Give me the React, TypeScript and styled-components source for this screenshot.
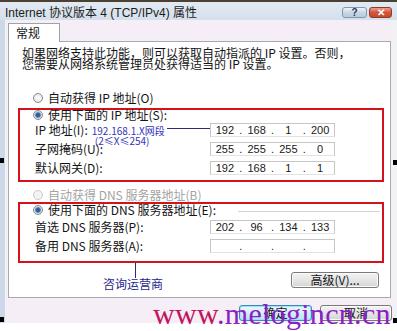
import styled, { createGlobalStyle } from "styled-components";

const GlobalStyle = createGlobalStyle`
  html, body {
    margin: 0;
    padding: 0;
    background: #ffffff;
  }
  body {
    font-family: "Noto Sans CJK SC", "Liberation Sans", sans-serif;
    font-size: 12px;
    color: #141414;
  }
`;

const Page = styled.div`
  position: relative;
  width: 397px;
  height: 331px;
  overflow: hidden;
  background: #ffffff;
`;

const Window = styled.div`
  width: 397px;
  height: 323px;
  box-sizing: border-box;
  border-top: 2px solid #4a4034;
  display: flex;
  flex-direction: column;
  background: #f6eef6;
`;

const TitleBar = styled.div`
  height: 18px;
  flex-shrink: 0;
  display: flex;
  justify-content: space-between;
  align-items: flex-start;
  padding: 0 5px 0 5px;
  background: linear-gradient(#e3eaf2, #d5e0eb);
`;

const Title = styled.div`
  font-family: "Liberation Sans", "Noto Sans CJK SC", sans-serif;
  font-size: 12px;
  line-height: 14px;
  margin-top: 4px;
  color: #1c1c1c;
  white-space: nowrap;
`;

const TitleButtons = styled.div`
  display: flex;
  gap: 2px;
  margin-top: 5px;
`;

const TitleButton = styled.div<{ $close?: boolean }>`
  width: ${(p) => (p.$close ? 23 : 25)}px;
  height: 11px;
  box-sizing: border-box;
  border: 1px solid ${(p) => (p.$close ? "#8c3a2c" : "#8197b2")};
  border-radius: 3px;
  background: ${(p) =>
    p.$close
      ? "linear-gradient(#e9a08e, #d4553c 50%, #c8482e)"
      : "linear-gradient(#eef3f8, #c9d6e4 50%, #bccbdc)"};
  color: ${(p) => (p.$close ? "#ffffff" : "#1f3a66")};
  font-family: "Liberation Sans", sans-serif;
  font-weight: bold;
  font-size: 10px;
  line-height: 9px;
  text-align: center;
`;

const Body = styled.div`
  flex: 1;
  display: flex;
  flex-direction: column;
  border-left: 5px solid #cbd9e9;
  border-right: 5px solid #f2f2f4;
  padding-top: 3px;
`;

const TabStrip = styled.div`
  display: flex;
  padding-left: 3px;
`;

const Tab = styled.div`
  position: relative;
  z-index: 1;
  width: 52px;
  height: 19px;
  box-sizing: border-box;
  border: 1px solid #9ea3a9;
  border-bottom: none;
  margin-bottom: -1px;
  background: #ffffff;
  padding-left: 7px;
  line-height: 18px;
  font-size: 12px;
`;

const Panel = styled.div`
  height: 257px;
  box-sizing: border-box;
  margin: 0 1px 0 3px;
  border: 1px solid #a6aaaf;
  background: #ffffff;
  padding-left: 9px;
  display: flex;
  flex-direction: column;
`;

const Intro = styled.div`
  margin: 5px 0 0 4px;
  font-size: 12px;
  line-height: 11px;
  white-space: nowrap;
`;

const RadioRow = styled.div<{ $h: number; $disabled?: boolean }>`
  height: ${(p) => p.$h}px;
  display: flex;
  align-items: center;
  font-size: 12px;
  line-height: 12px;
  white-space: nowrap;
  color: ${(p) => (p.$disabled ? "#a3a3a3" : "#141414")};
`;

const Radio = styled.span<{ $checked?: boolean; $disabled?: boolean }>`
  width: 10px;
  height: 10px;
  box-sizing: border-box;
  border-radius: 50%;
  flex-shrink: 0;
  margin-right: 5px;
  border: 1px solid ${(p) => (p.$disabled ? "#c9c9c9" : "#858b93")};
  background: ${(p) =>
    p.$checked
      ? "radial-gradient(circle, #2a4f80 0, #3d6aa3 2px, #9db8d6 3px, #f4f4f4 4px)"
      : p.$disabled
      ? "#f3f3f3"
      : "radial-gradient(circle, #ffffff 0, #e2e2e2 5px)"};
`;

const GroupLine = styled.span`
  flex: 1;
  height: 0;
  margin: 3px 2px 0 22px;
  border-top: 1px solid #d3d3d3;
`;

const RedBox = styled.div<{ $top: number; $pb: number }>`
  margin: ${(p) => p.$top}px 6px 0 0;
  border: 2px solid #d3121c;
  padding: 0 0 ${(p) => p.$pb}px 13px;
  display: flex;
  flex-direction: column;
`;

const FieldRow = styled.div<{ $mt: number }>`
  margin-top: ${(p) => p.$mt}px;
  height: 14px;
  display: grid;
  grid-template-columns: 175px 125px;
  padding-left: 2px;
`;

const Label = styled.div`
  display: flex;
  align-items: flex-start;
  font-size: 12px;
  line-height: 12px;
  padding-top: 1px;
  white-space: nowrap;
`;

const Note = styled.div`
  margin: 2px 0 0 4px;
  font-size: 10px;
  line-height: 10px;
  color: #3434b8;
`;

const NoteSub = styled.div`
  padding-left: 3px;
`;

const Connector = styled.span`
  flex: 1;
  height: 0;
  margin: 4px 0 0 2px;
  border-top: 1px solid #2a2a78;
`;

const IpBox = styled.div`
  height: 14px;
  box-sizing: border-box;
  border: 1px solid #c6c6c6;
  border-bottom-color: #e2e2e2;
  background: #ffffff;
  display: flex;
  font-family: "Liberation Sans", sans-serif;
  font-size: 11px;
  line-height: 12px;
  color: #202020;
`;

const Seg = styled.span`
  flex: 1;
  text-align: center;
`;

const Dot = styled.span`
  width: 4px;
  text-align: center;
`;

const Footer = styled.div`
  flex: 1;
  display: flex;
  justify-content: space-between;
  align-items: flex-start;
`;

const Callout = styled.div`
  margin-left: 85px;
  width: 60px;
  display: flex;
  flex-direction: column;
  align-items: center;
`;

const CalloutLine = styled.span`
  width: 1px;
  height: 15px;
  margin-left: 4px;
  background: #2a2a78;
`;

const CalloutText = styled.span`
  font-size: 12px;
  line-height: 12px;
  color: #1e1e8c;
  white-space: nowrap;
`;

const Button = styled.div<{ $w: number; $focus?: boolean }>`
  width: ${(p) => p.$w}px;
  height: 16px;
  box-sizing: border-box;
  border: 1px solid ${(p) => (p.$focus ? "#3c8ab8" : "#7a7a7a")};
  border-radius: 3px;
  background: ${(p) =>
    p.$focus
      ? "linear-gradient(#eaf6fd, #d6eefc 50%, #b9e1f8)"
      : "linear-gradient(#f3f3f3, #e6e6e6 50%, #d4d4d4)"};
  box-shadow: ${(p) => (p.$focus ? "inset 0 0 0 1px #9fe2f8" : "inset 0 0 0 1px #fbfbfb")};
  font-size: 12px;
  line-height: 14px;
  text-align: center;
  color: #141414;
`;

const AdvButton = styled(Button)`
  margin: 9px 11px 0 0;
`;

const ButtonRow = styled.div`
  margin-top: 7px;
  display: flex;
  justify-content: flex-end;
  gap: 8px;
`;

const Watermark = styled.div`
  position: absolute;
  left: 153px;
  top: 299px;
  font-family: "Liberation Serif", serif;
  font-size: 30px;
  line-height: 30px;
  letter-spacing: 0.3px;
  color: #8a1fc4;
  white-space: nowrap;
  pointer-events: none;
`;

const Www = styled.span`
  color: #c4125c;
`;

const Handle = styled.span<{ $x: number; $y: number }>`
  position: absolute;
  left: ${(p) => p.$x}px;
  top: ${(p) => p.$y}px;
  width: 4px;
  height: 5px;
  background: #000000;
`;

function IpField({ parts }: { parts: string[] }) {
  return (
    <IpBox>
      {parts.map((v, i) => (
        <>
          {i > 0 && <Dot key={`d${i}`}>.</Dot>}
          <Seg key={`s${i}`}>{v}</Seg>
        </>
      ))}
    </IpBox>
  );
}

export default function App() {
  return (
    <Page>
      <GlobalStyle />
      <Window>
        <TitleBar>
          <Title>Internet 协议版本 4 (TCP/IPv4) 属性</Title>
          <TitleButtons>
            <TitleButton>?</TitleButton>
            <TitleButton $close>✕</TitleButton>
          </TitleButtons>
        </TitleBar>
        <Body>
          <TabStrip>
            <Tab>常规</Tab>
          </TabStrip>
          <Panel>
            <Intro>
              如果网络支持此功能，则可以获取自动指派的 IP 设置。否则，
              <br />
              您需要从网络系统管理员处获得适当的 IP 设置。
            </Intro>

            <RadioRow $h={14} style={{ marginTop: 22, paddingLeft: 15 }}>
              <Radio />
              自动获得 IP 地址(O)
            </RadioRow>

            <RedBox $top={3} $pb={5}>
              <RadioRow $h={10}>
                <Radio $checked />
                使用下面的 IP 地址(S):
              </RadioRow>
              <FieldRow $mt={3}>
                <Label>
                  IP 地址(I):
                  <Note>
                    192.168.1.X网段
                    <NoteSub>(2≤X≤254)</NoteSub>
                  </Note>
                  <Connector />
                </Label>
                <IpField parts={["192", "168", "1", "200"]} />
              </FieldRow>
              <FieldRow $mt={5}>
                <Label>子网掩码(U):</Label>
                <IpField parts={["255", "255", "255", "0"]} />
              </FieldRow>
              <FieldRow $mt={5}>
                <Label>默认网关(D):</Label>
                <IpField parts={["192", "168", "1", "1"]} />
              </FieldRow>
            </RedBox>

            <RadioRow $h={12} $disabled style={{ marginTop: 7, paddingLeft: 15 }}>
              <Radio $disabled />
              自动获得 DNS 服务器地址(B)
            </RadioRow>

            <RedBox $top={1} $pb={8}>
              <RadioRow $h={12}>
                <Radio $checked />
                使用下面的 DNS 服务器地址(E):
                <GroupLine />
              </RadioRow>
              <FieldRow $mt={4}>
                <Label>首选 DNS 服务器(P):</Label>
                <IpField parts={["202", "96", "134", "133"]} />
              </FieldRow>
              <FieldRow $mt={5}>
                <Label>备用 DNS 服务器(A):</Label>
                <IpField parts={["", "", "", ""]} />
              </FieldRow>
            </RedBox>

            <Footer>
              <Callout>
                <CalloutLine />
                <CalloutText>咨询运营商</CalloutText>
              </Callout>
              <AdvButton $w={88}>高级(V)...</AdvButton>
            </Footer>
          </Panel>
          <ButtonRow>
            <Button $w={73} $focus>
              确定
            </Button>
            <Button $w={72}>取消</Button>
          </ButtonRow>
        </Body>
      </Window>
      <Watermark>
        <Www>www</Www>.melogincn.cn
      </Watermark>
      <Handle $x={0} $y={158} />
      <Handle $x={393} $y={160} />
      <Handle $x={0} $y={317} />
      <Handle $x={393} $y={318} />
    </Page>
  );
}
